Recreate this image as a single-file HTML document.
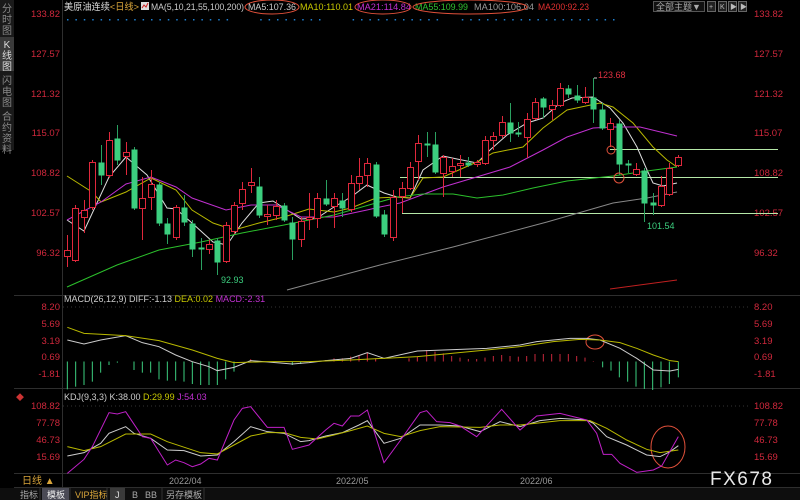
<!DOCTYPE html>
<html><head><meta charset="utf-8">
<style>
body{margin:0;background:#000;width:800px;height:500px;overflow:hidden;font-family:"Liberation Sans","Noto Sans CJK SC",sans-serif}
svg{display:block}
</style></head><body>
<svg id="s" width="800" height="500" xmlns="http://www.w3.org/2000/svg" font-family="Liberation Sans, Noto Sans CJK SC, sans-serif">
<rect width="800" height="500" fill="#000"/>
<rect x="0" y="0" width="14" height="150" fill="#1a1a1a"/>
<rect x="0" y="37" width="14" height="34" fill="#3a3a3a"/>
<g fill="#8a8a8a" font-size="10" text-anchor="middle">
<text x="7" y="12">分</text><text x="7" y="23">时</text><text x="7" y="34">图</text>
<text x="7" y="48" fill="#ddd">K</text><text x="7" y="59" fill="#ddd">线</text><text x="7" y="70" fill="#ddd">图</text>
<text x="7" y="84">闪</text><text x="7" y="95">电</text><text x="7" y="106">图</text>
<text x="7" y="120">合</text><text x="7" y="131">约</text><text x="7" y="142">资</text><text x="7" y="153">料</text>
</g>
<g stroke="#2e2e2e" stroke-width="1">
<line x1="62.5" y1="0" x2="62.5" y2="488"/>
<line x1="14" y1="295.5" x2="800" y2="295.5"/>
<line x1="14" y1="388.5" x2="800" y2="388.5"/>
<line x1="14" y1="473.5" x2="800" y2="473.5"/>
<line x1="14" y1="487.5" x2="800" y2="487.5"/>
</g>
<g stroke="#333" stroke-dasharray="1,3">
<line x1="63" y1="307" x2="748" y2="307"/>
<line x1="63" y1="406" x2="748" y2="406"/>
</g>
<g id="dots" fill="#1e7fd0"></g>
<g font-size="9.5">
<text x="64" y="10" fill="#ddd" textLength="75" lengthAdjust="spacingAndGlyphs">美原油连续<tspan fill="#d9a53a">&lt;日线&gt;</tspan></text>
<rect x="141" y="2" width="8" height="8" fill="#ddd"/><path d="M142 8 L144 5 L146 7 L148 3" stroke="#c22" fill="none"/>
<text x="151" y="10" fill="#ccc" textLength="93" lengthAdjust="spacingAndGlyphs">MA(5,10,21,55,100,200)</text>
<text x="248" y="10" fill="#ccc" textLength="48" lengthAdjust="spacingAndGlyphs">MA5:107.36</text>
<text x="300" y="10" fill="#c8c800" textLength="53" lengthAdjust="spacingAndGlyphs">MA10:110.01</text>
<text x="357" y="10" fill="#c030d0" textLength="54" lengthAdjust="spacingAndGlyphs">MA21:114.84</text>
<text x="415" y="10" fill="#30c030" textLength="53" lengthAdjust="spacingAndGlyphs">MA55:109.99</text>
<text x="474" y="10" fill="#999" textLength="60" lengthAdjust="spacingAndGlyphs">MA100:106.04</text>
<text x="538" y="10" fill="#e03030" textLength="51" lengthAdjust="spacingAndGlyphs">MA200:92.23</text>
</g>
<g fill="none" stroke="#e0503a" stroke-width="1">
<ellipse cx="272" cy="7" rx="27" ry="7"/>
<ellipse cx="383" cy="7" rx="28" ry="7"/>
<ellipse cx="470" cy="7" rx="57" ry="7"/>
</g>
<rect x="653.5" y="1.5" width="51" height="10" fill="#111" stroke="#555"/>
<text x="656" y="10" fill="#aaa" font-size="9">全部主题▼</text>
<g fill="#222" stroke="#666"><rect x="707.5" y="1.5" width="8" height="10"/><rect x="718.5" y="1.5" width="8" height="10"/><rect x="728.5" y="1.5" width="8" height="10"/><rect x="738.5" y="1.5" width="8" height="10"/></g>
<g fill="#bbb" font-size="7"><text x="709" y="9">+</text><text x="720" y="9">K</text><text x="730" y="9">▶</text><text x="740" y="9">▶</text></g>
<g fill="#d0283c" font-size="9.5" id="ax"></g>
<g id="hl" stroke="#b5e8a8" stroke-width="1">
<line x1="610" y1="149.5" x2="778" y2="149.5"/>
<line x1="400" y1="177.5" x2="778" y2="177.5"/>
<line x1="402" y1="213.5" x2="778" y2="213.5"/>
</g>
<g id="ma" fill="none" stroke-width="1"></g>
<g id="cd"></g>
<g fill="none" stroke="#e0503a"><circle cx="611" cy="150" r="4"/><circle cx="619" cy="178" r="5"/>
<ellipse cx="595" cy="342" rx="9" ry="7"/><ellipse cx="668" cy="447" rx="17" ry="21"/></g>
<text x="598" y="78" fill="#e03040" font-size="9">123.68</text>
<text x="647" y="229" fill="#3ccf7f" font-size="9">101.54</text>
<text x="221" y="283" fill="#3ccf7f" font-size="9">92.93</text>
<line x1="594" y1="78" x2="597" y2="78" stroke="#ccc"/>
<text x="64" y="302" font-size="9"><tspan fill="#ccc">MACD(26,12,9) DIFF:-1.13 </tspan><tspan fill="#c8c800">DEA:0.02 </tspan><tspan fill="#c030d0">MACD:-2.31</tspan></text>
<g id="mb"></g>
<text x="64" y="400" font-size="9"><tspan fill="#ccc">KDJ(9,3,3) K:38.00 </tspan><tspan fill="#c8c800">D:29.99 </tspan><tspan fill="#c030d0">J:54.03</tspan></text>
<text x="16" y="400" fill="#c33" font-size="8">◆</text>
<text x="22" y="484" fill="#d9a53a" font-size="10">日线 ▲</text>
<g fill="#999" font-size="9"><text x="169" y="484">2022/04</text><text x="336" y="484">2022/05</text><text x="520" y="484">2022/06</text></g>
<rect x="0" y="488" width="800" height="12" fill="#0e0e0e"/>
<rect x="42" y="488" width="27" height="12" fill="#4a4a55"/>
<rect x="110" y="488" width="15" height="12" fill="#3a3a3a"/>
<g font-size="9" fill="#aaa"><text x="20" y="498">指标</text><text x="47" y="498" fill="#eee">模板</text><text x="75" y="498" fill="#d9a53a">VIP指标</text><text x="115" y="498" fill="#ddd">J</text><text x="132" y="498">B</text><text x="145" y="498">BB</text><text x="166" y="498">另存模板</text></g>
<g stroke="#333"><line x1="40" y1="488" x2="40" y2="500"/><line x1="70" y1="488" x2="70" y2="500"/><line x1="107" y1="488" x2="107" y2="500"/><line x1="162" y1="488" x2="162" y2="500"/><line x1="204" y1="488" x2="204" y2="500"/></g>
<text x="710" y="485" fill="#e8e8e8" font-size="19" letter-spacing="1.5">FX678</text>
</svg>
<script>
var NS="http://www.w3.org/2000/svg";
function el(p,t,a){var e=document.createElementNS(NS,t);for(var k in a)e.setAttribute(k,a[k]);document.getElementById(p).appendChild(e);return e;}
for(var x=67;x<620;x+=8.4){if((x>235&&x<255)||(x>320&&x<350)||(x>440&&x<460))continue;el("dots","rect",{x:x,y:19,width:1.5,height:1.5});}
var L=[["133.82",17],["127.57",57],["121.32",97],["115.07",136],["108.82",176],["102.57",216],["96.32",256],["8.20",310],["5.69",327],["3.19",344],["0.69",360],["-1.81",377],["108.82",409],["77.78",426],["46.73",443],["15.69",460]];
L.forEach(function(l){var t=el("ax","text",{x:60,y:l[1],"text-anchor":"end"});t.textContent=l[0];var t2=el("ax","text",{x:754,y:l[1]});t2.textContent=l[0];});
var C=[[67,250,256,235,267,1],[75,208,260,205,262,1],[84,210,217,200,233,1],[92,162,207,160,210,1],[101,162,175,145,185,0],[109,140,175,132,178,1],[117,138,160,125,165,0],[126,152,156,142,175,1],[134,149,208,147,210,0],[142,198,208,177,240,1],[151,184,197,170,210,1],[159,184,223,182,226,0],[167,223,234,218,244,0],[176,207,237,205,240,1],[184,207,222,195,226,0],[192,223,249,220,257,0],[201,247,249,238,270,0],[209,244,249,240,254,1],[217,240,262,238,275,0],[226,225,261,222,263,1],[234,205,231,202,234,1],[242,189,203,182,210,1],[251,182,185,168,193,1],[259,186,215,177,218,0],[267,214,216,205,225,1],[276,206,215,200,220,1],[284,205,220,203,222,0],[292,222,239,217,260,0],[301,221,239,217,247,1],[309,217,219,193,230,1],[317,198,218,193,228,1],[326,198,204,180,206,0],[334,198,206,193,228,1],[342,200,208,193,217,0],[351,183,209,175,212,1],[359,176,183,158,190,1],[367,163,175,158,187,1],[376,164,216,162,218,0],[384,214,234,210,237,0],[393,197,237,190,241,1],[402,188,196,182,213,1],[410,167,188,162,190,1],[418,143,161,135,180,1],[427,143,145,132,157,0],[435,144,172,132,174,0],[443,157,173,155,197,1],[452,166,171,158,177,1],[460,163,165,155,177,1],[468,162,165,157,167,0],[477,162,164,160,167,1],[485,140,163,136,165,1],[493,136,140,132,150,1],[502,122,135,116,138,1],[510,122,133,103,142,0],[518,132,134,122,137,0],[527,119,137,113,158,1],[535,102,118,98,120,1],[543,98,107,97,118,0],[552,105,109,100,120,1],[560,88,105,83,107,1],[568,88,94,85,98,0],[577,95,100,85,103,0],[585,97,102,87,104,1],[593,97,109,78,123,0],[602,109,128,103,130,0],[610,123,129,118,147,1],[619,123,164,120,175,0],[628,163,165,160,173,0],[636,169,174,163,176,1],[644,170,203,168,222,0],[653,202,205,193,215,0],[661,186,205,176,207,1],[669,168,194,163,196,1],[678,157,165,155,167,1]];
C.forEach(function(c){var red=c[5],col=red?"#e0283c":"#3ccf7f";
el("cd","line",{x1:c[0]+.5,y1:c[3],x2:c[0]+.5,y2:c[4],stroke:red?"#e0283c":"#2aa060"});
var h=Math.max(1,c[2]-c[1]);
el("cd","rect",{x:c[0]-2.5,y:c[1]+.5,width:6,height:h,fill:red?"#000":col,stroke:col,"stroke-width":red?1:0});});
function pl(g,pts,col){var s=pts.map(function(p){return p[0]+","+p[1]}).join(" ");el(g,"polyline",{points:s,stroke:col,fill:"none","stroke-width":1});}
pl("ma",[[67,220],[84,231],[109,177],[126,157],[147,175],[167,208],[176,209],[192,223],[213,242],[227,245],[242,223],[259,203],[273,201],[287,210],[301,219],[317,218],[334,207],[351,197],[367,185],[384,193],[397,197],[410,198],[423,170],[443,156],[457,159],[477,163],[490,150],[507,135],[527,123],[543,118],[560,103],[572,98],[593,97],[610,108],[623,123],[637,147],[647,170],[653,183],[663,186],[677,183]],"#ddd");
pl("ma",[[67,176],[92,192],[101,202],[126,192],[151,178],[176,190],[192,210],[213,223],[234,230],[259,223],[284,217],[309,209],[334,212],[351,208],[376,198],[400,197],[410,198],[423,178],[443,177],[477,162],[493,153],[523,147],[543,128],[567,110],[600,103],[613,107],[633,123],[653,147],[667,160],[677,167]],"#b8b800");
pl("ma",[[67,220],[101,202],[126,184],[151,177],[176,187],[192,198],[226,210],[251,205],[276,205],[301,217],[334,217],[367,210],[380,207],[400,203],[443,187],[510,167],[543,150],[567,137],[593,128],[613,127],[640,127],[677,136]],"#c030d0");
pl("ma",[[67,287],[117,265],[159,250],[201,242],[242,233],[284,225],[334,215],[397,197],[423,194],[453,194],[477,198],[503,195],[533,188],[567,181],[613,176],[647,171],[677,167]],"#2cc02c");
pl("ma",[[287,290],[380,265],[453,247],[547,222],[613,203],[647,198],[677,192]],"#888");
pl("ma",[[610,289],[677,280]],"#c02020");
var z=361.5;
var g1=[[22,298],[47,290],[72,285],[97,275],[122,248],[147,225],[172,218],[222,240],[247,248],[272,248],[297,268],[322,272],[347,272],[372,275],[397,282],[422,285],[447,285],[472,285],[497,268],[522,245],[697,225],[722,222]];
g1.forEach(function(b){el("mb","line",{x1:b[0]/3+60,y1:z,x2:b[0]/3+60,y2:b[1]/3+290,stroke:"#3ccf7f"});});
var r1=[[572,208],[797,210],[822,205],[847,205],[872,200],[897,195],[922,188],[947,205],[1047,205],[1072,200]];
r1.forEach(function(b){el("mb","line",{x1:b[0]/3+60,y1:z,x2:b[0]/3+60,y2:b[1]/3+290,stroke:"#e0283c"});});
var r2=[[20,180],[45,185],[70,190],[95,198],[120,203],[145,207],[170,207],[195,203],[220,198],[245,195],[270,198],[295,200],[320,198],[345,192],[370,192],[395,192],[420,192],[445,192],[470,198],[495,203],[520,213]];
r2.forEach(function(b){el("mb","line",{x1:b[0]/3+420,y1:z,x2:b[0]/3+420,y2:b[1]/3+290,stroke:"#c8283c"});});
var g2=[[548,232],[573,242],[598,262],[623,275],[648,290],[673,297],[698,300],[723,292],[748,282],[775,262]];
g2.forEach(function(b){el("mb","line",{x1:b[0]/3+420,y1:z,x2:b[0]/3+420,y2:b[1]/3+290,stroke:"#3ccf7f"});});
function pl2(a,b,col){var s=a.map(function(p){return (p[0]/3+60)+","+(p[1]/3+290)}).concat(b.map(function(p){return (p[0]/3+420)+","+(p[1]/3+290)})).join(" ");el("mb","polyline",{points:s,stroke:col,fill:"none"});}
pl2([[22,150],[72,162],[122,150],[197,137],[247,158],[297,170],[347,195],[397,215],[447,230],[472,242],[522,232],[572,212],[697,222],[747,218],[797,212],[872,205],[922,188],[972,205],[1072,183]],[[120,178],[200,175],[300,165],[350,155],[450,145],[500,145],[540,150],[600,175],[650,205],[700,240],[750,243],[775,238]],"#ccc");
pl2([[22,112],[72,130],[197,137],[297,152],[397,180],[472,205],[522,218],[622,215],[747,215],[872,210],[972,205],[1072,200]],[[200,180],[300,170],[400,155],[480,148],[540,150],[600,158],[650,175],[700,195],[750,212],[775,215]],"#b8b800");
pl2([[22,498],[72,488],[122,460],[147,430],[197,410],[222,430],[272,445],[322,480],[372,482],[422,498],[472,495],[522,455],[572,410],[622,425],[672,430],[722,455],[747,452],[797,438],[847,428],[897,405],[922,392],[972,460],[1022,445],[1080,405]],[[60,405],[120,408],[180,425],[240,395],[300,410],[360,392],[420,385],[500,390],[520,400],[560,440],[620,465],[680,495],[720,500],[750,485],[775,467]],"#ccc");
pl2([[22,470],[72,482],[122,470],[197,432],[272,432],[322,455],[422,488],[472,492],[522,465],[572,438],[622,428],[672,428],[722,442],[772,447],[822,435],[872,422],[922,408],[972,430],[1022,440],[1080,422]],[[60,410],[180,412],[240,405],[300,405],[420,392],[510,392],[560,415],[620,450],[680,478],[720,488],[775,480]],"#b8b800");
pl2([[22,550],[72,508],[97,470],[147,368],[172,372],[197,365],[247,440],[272,445],[322,525],[347,510],[372,518],[397,530],[422,522],[447,505],[472,510],[522,390],[547,355],[572,350],[622,412],[672,412],[697,478],[747,465],[797,420],[822,400],[847,408],[872,378],[897,378],[922,360],[972,518],[1022,450],[1080,368]],[[20,362],[50,395],[90,398],[120,408],[170,440],[245,358],[300,420],[350,378],[420,370],[500,390],[530,430],[550,493],[575,493],[600,520],[650,547],[700,540],[725,528],[775,440]],"#c020c8");
</script>
</body></html>
